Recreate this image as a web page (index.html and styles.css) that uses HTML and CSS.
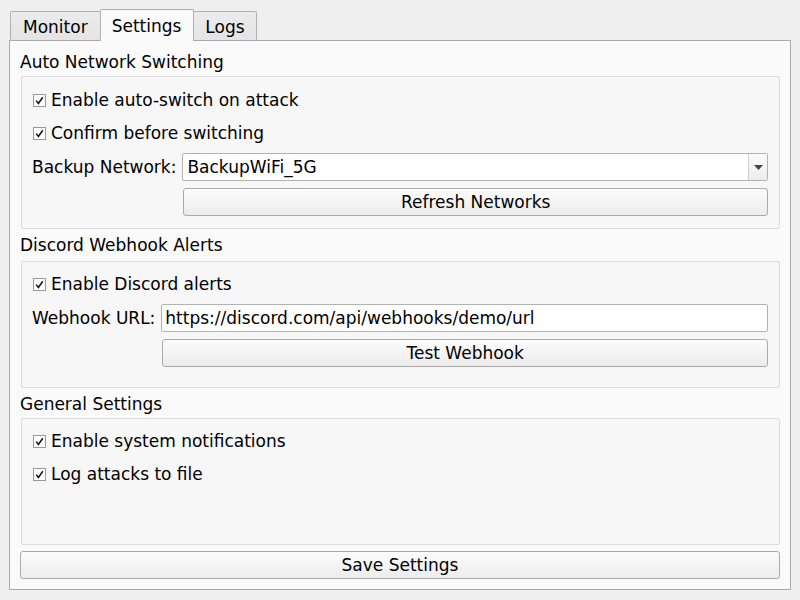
FILE: index.html
```html
<!DOCTYPE html>
<html>
<head>
<meta charset="utf-8">
<link rel="stylesheet" href="styles.css">
</head>
<body>
<div class="window">
  <div class="tabbar">
    <div class="tab">Monitor</div>
    <div class="tab active">Settings</div>
    <div class="tab last">Logs</div>
  </div>
  <div class="pane">
    <div class="group-title first">Auto Network Switching</div>
    <div class="group g1">
      <label class="check"><span class="box"><svg width="11" height="11" viewBox="0 0 11 11"><path d="M2.2 5.6L4.4 8.4L8.8 2.2" fill="none" stroke="#111" stroke-width="1.5"/></svg></span>Enable auto-switch on attack</label>
      <label class="check"><span class="box"><svg width="11" height="11" viewBox="0 0 11 11"><path d="M2.2 5.6L4.4 8.4L8.8 2.2" fill="none" stroke="#111" stroke-width="1.5"/></svg></span>Confirm before switching</label>
      <div class="form-row combo-row">
        <span class="label">Backup Network:</span>
        <div class="combo"><span class="combo-text">BackupWiFi_5G</span><span class="combo-btn"><svg width="9" height="5" viewBox="0 0 9 5"><path d="M0 0h9L4.5 5z" fill="#444"/></svg></span></div>
      </div>
      <div class="form-row btn-row">
        <span class="label spacer">Backup Network:</span>
        <button class="btn">Refresh Networks</button>
      </div>
    </div>
    <div class="group-title">Discord Webhook Alerts</div>
    <div class="group g2">
      <label class="check"><span class="box"><svg width="11" height="11" viewBox="0 0 11 11"><path d="M2.2 5.6L4.4 8.4L8.8 2.2" fill="none" stroke="#111" stroke-width="1.5"/></svg></span>Enable Discord alerts</label>
      <div class="form-row input-row">
        <span class="label">Webhook URL:</span>
        <div class="input">https://discord.com/api/webhooks/demo/url</div>
      </div>
      <div class="form-row btn-row2">
        <span class="label spacer">Webhook URL:</span>
        <button class="btn">Test Webhook</button>
      </div>
    </div>
    <div class="group-title">General Settings</div>
    <div class="group g3">
      <label class="check"><span class="box"><svg width="11" height="11" viewBox="0 0 11 11"><path d="M2.2 5.6L4.4 8.4L8.8 2.2" fill="none" stroke="#111" stroke-width="1.5"/></svg></span>Enable system notifications</label>
      <label class="check"><span class="box"><svg width="11" height="11" viewBox="0 0 11 11"><path d="M2.2 5.6L4.4 8.4L8.8 2.2" fill="none" stroke="#111" stroke-width="1.5"/></svg></span>Log attacks to file</label>
    </div>
    <button class="btn save">Save Settings</button>
  </div>
</div>
</body>
</html>
```
FILE: styles.css
```css
* { box-sizing: border-box; }
html, body {
  margin: 0;
  padding: 0;
  background: #efefef;
  font-family: "DejaVu Sans", sans-serif;
  font-size: 17px;
  color: #000;
  width: 800px;
  height: 600px;
  overflow: hidden;
}
.window {
  padding: 9px 10px 0 9px;
}
.tabbar {
  display: flex;
  align-items: flex-end;
  height: 31px;
  padding-left: 1px;
  position: relative;
  z-index: 2;
}
.tab {
  height: 29px;
  padding: 2px 12px 0 12px;
  line-height: 26px;
  border: 1px solid #b0b0b0;
  border-bottom: none;
  border-radius: 2px 2px 0 0;
  background: linear-gradient(#ececec, #e4e4e4);
  margin-right: -1px;
}
.tab.active {
  height: 32px;
  line-height: 28px;
  background: #fafafa;
  margin-bottom: -1px;
  padding: 2px 12px 0 11px;
  position: relative;
  z-index: 3;
}
.tab.last { padding: 2px 11px 0 11px; }
.pane {
  width: 782px;
  height: 550px;
  border: 1px solid #a9a9a9;
  background: #fafafa;
  padding: 10px 10px 0 10px;
  display: flex;
  flex-direction: column;
}
.group-title {
  height: 20px;
  line-height: 20px;
}
.group-title.first {
  padding-top: 1px;
}
.group {
  margin-left: 1px;
  border: 1px solid #dcdcdc;
  border-radius: 2px;
  background: #f7f7f7;
  padding: 0 11px 0 10px;
  display: flex;
  flex-direction: column;
}
.g1 { margin-top: 5px; height: 153px; padding-top: 11px; }
.g2 { margin-top: 6px; height: 127px; padding-top: 10px; }
.g3 { margin-top: 4px; height: 127px; padding-top: 10px; }
.group + .group-title { margin-top: 6px; }
.check {
  display: flex;
  align-items: center;
  height: 24px;
  margin-bottom: 9px;
  white-space: nowrap;
}
.box {
  width: 13px;
  height: 13px;
  border: 1px solid #9a9a9a;
  background: #fff;
  margin-left: 1px;
  margin-right: 5px;
  display: flex;
  align-items: center;
  justify-content: center;
}
.box svg { display: block; }
.form-row {
  display: flex;
  align-items: center;
  gap: 6px;
}
.label { white-space: nowrap; }
.spacer { visibility: hidden; }
.combo-row { height: 28px; margin-top: -1px; }
.btn-row { height: 28px; margin-top: 7px; }
.combo {
  flex: 1;
  height: 28px;
  display: flex;
  border: 1px solid #b2b2b2;
  border-radius: 2px;
  background: #fff;
}
.combo-text {
  flex: 1;
  padding-left: 4px;
  line-height: 26px;
}
.combo-btn {
  width: 19px;
  border-left: 1px solid #cfcfcf;
  background: linear-gradient(#fbfbfb, #ededed);
  display: flex;
  align-items: center;
  justify-content: center;
}
.btn {
  flex: 1;
  height: 28px;
  font-family: inherit;
  font-size: 17px;
  color: #000;
  border: 1px solid #ababab;
  border-radius: 3px;
  background: linear-gradient(#fcfcfc, #ececec);
  padding: 0;
}
.btn-row .btn, .btn-row2 .btn { margin-left: 1px; }
.input-row { height: 28px; margin-top: -1px; }
.input {
  flex: 1;
  height: 28px;
  border: 1px solid #b2b2b2;
  border-radius: 2px;
  background: #fff;
  line-height: 26px;
  padding-left: 3px;
  white-space: nowrap;
}
.btn-row2 { height: 28px; margin-top: 7px; }
.save {
  flex: none;
  width: 760px;
  margin-top: 6px;
}
```
